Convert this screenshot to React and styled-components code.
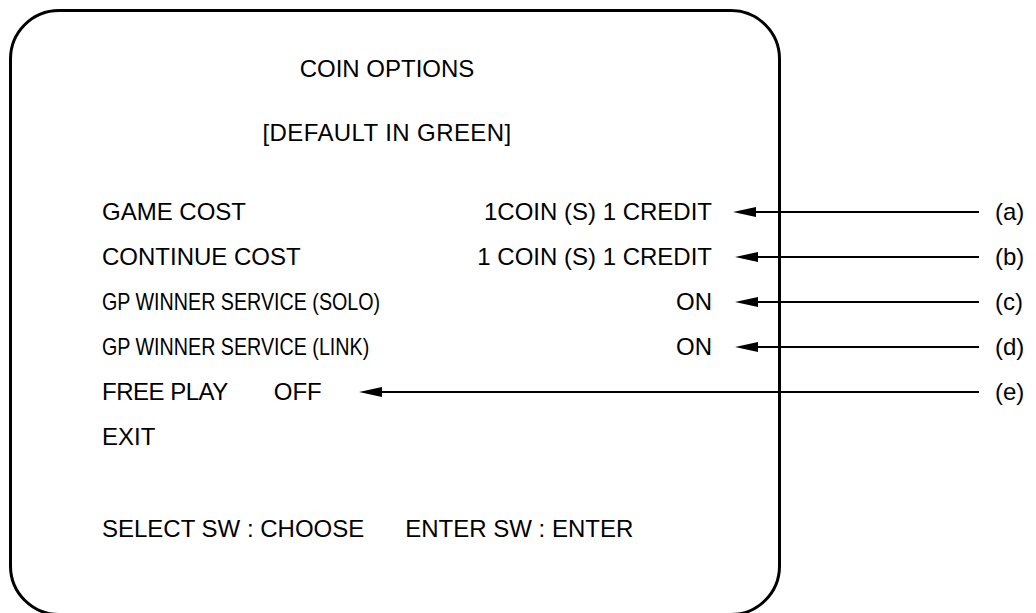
import React from 'react'
import styled, { createGlobalStyle } from 'styled-components'

const GlobalStyle = createGlobalStyle`
  html, body {
    margin: 0;
    padding: 0;
    background: #fff;
    overflow: hidden;
  }
  body {
    font-family: "Liberation Sans", Arial, sans-serif;
    color: #000;
  }
`

const Page = styled.div`
  width: 1036px;
  height: 613px;
  padding: 9px 0 0 9px;
  box-sizing: border-box;
`

const Frame = styled.div`
  width: 772px;
  height: 607px;
  box-sizing: border-box;
  border: 3px solid #000;
  border-radius: 50px;
  padding: 34px 0 0 90px;
  display: flex;
  flex-direction: column;
`

const Heading = styled.div`
  height: 45px;
  line-height: 45px;
  font-size: 24px;
  text-align: center;
  margin-left: -90px;
  padding-right: 16px;
  margin-top: ${p => p.$top || 0}px;
  letter-spacing: ${p => p.$spread || 0}px;
`

const Menu = styled.div`
  margin-top: 34px;
  margin-right: -258px;
  display: flex;
  flex-direction: column;
`

const Row = styled.div`
  display: grid;
  grid-template-columns: ${p => (p.$inline ? 'auto auto 1fr' : '1fr auto 324px')};
  align-items: center;
  height: 45px;
  line-height: 45px;
  font-size: 24px;
  white-space: nowrap;
`

const Label = styled.span`
  display: inline-block;
  transform-origin: left center;
  transform: scaleX(${p => p.$squeeze || 1});
  letter-spacing: ${p => p.$tight || 0}px;
`

const Value = styled.span`
  margin-left: ${p => p.$gap || 0}px;
`

const Callout = styled.div`
  display: flex;
  align-items: center;
  padding-left: ${p => p.$gap}px;
  height: 100%;
`

const ArrowLine = styled.svg`
  flex: 1;
  height: 12px;
  display: block;
`

const ArrowHead = styled.span`
  width: 0;
  height: 0;
  border-top: 5.5px solid transparent;
  border-bottom: 5.5px solid transparent;
  border-right: 23px solid #000;
  margin-right: -2px;
  flex: none;
`

const Tag = styled.span`
  width: 41px;
  margin-left: 16px;
  font-size: 24px;
`

const Footer = styled.div`
  margin-top: 47px;
  display: flex;
  gap: 41px;
  height: 45px;
  line-height: 45px;
  font-size: 24px;
  white-space: nowrap;
`

const Arrow = () => (
  <ArrowLine viewBox="0 0 100 12" preserveAspectRatio="none">
    <line x1="0" y1="6" x2="100" y2="6" stroke="#000" strokeWidth="2" vectorEffect="non-scaling-stroke" />
  </ArrowLine>
)

const options = [
  { label: 'GAME COST', value: '1COIN (S) 1 CREDIT', tag: '(a)', gap: 21 },
  { label: 'CONTINUE COST', value: '1 COIN (S) 1 CREDIT', tag: '(b)', gap: 23 },
  { label: 'GP WINNER SERVICE (SOLO)', value: 'ON', tag: '(c)', gap: 23, squeeze: 0.82 },
  { label: 'GP WINNER SERVICE (LINK)', value: 'ON', tag: '(d)', gap: 23, squeeze: 0.82 },
]

export default function App() {
  return (
    <>
      <GlobalStyle />
      <Page>
        <Frame>
          <Heading>COIN OPTIONS</Heading>
          <Heading $top={19} $spread={0.4}>[DEFAULT IN GREEN]</Heading>
          <Menu>
            {options.map(o => (
              <Row key={o.tag}>
                <Label $squeeze={o.squeeze}>{o.label}</Label>
                <Value>{o.value}</Value>
                <Callout $gap={o.gap}>
                  <ArrowHead />
                  <Arrow />
                  <Tag>{o.tag}</Tag>
                </Callout>
              </Row>
            ))}
            <Row $inline>
              <Label $tight={-0.5}>FREE PLAY</Label>
              <Value $gap={46}>OFF</Value>
              <Callout $gap={37}>
                <ArrowHead />
                <Arrow />
                <Tag>(e)</Tag>
              </Callout>
            </Row>
            <Row $inline>
              <Label>EXIT</Label>
            </Row>
          </Menu>
          <Footer>
            <span>SELECT SW : CHOOSE</span>
            <span>ENTER SW : ENTER</span>
          </Footer>
        </Frame>
      </Page>
    </>
  )
}
